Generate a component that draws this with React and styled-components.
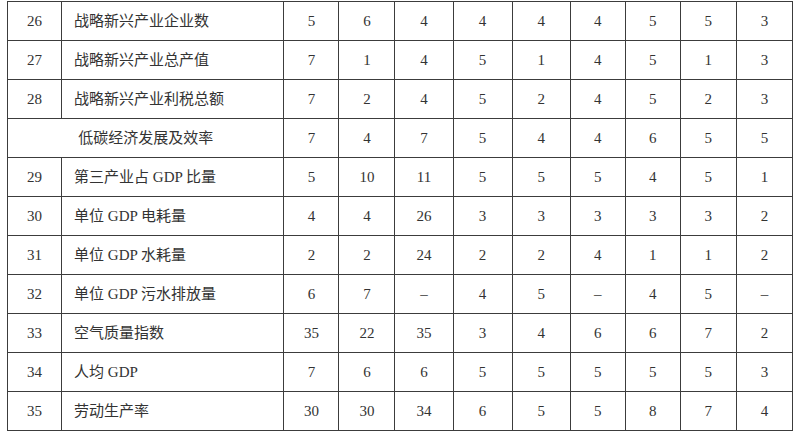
import React from 'react';
import styled, { createGlobalStyle } from 'styled-components';

const GlobalStyle = createGlobalStyle`
  html, body {
    margin: 0;
    padding: 0;
    background: #ffffff;
  }
  body {
    font-family: "Liberation Serif", "Noto Sans CJK SC", serif;
    color: #333333;
  }
`;

const Page = styled.div`
  padding: 1px 0 0 7px;
`;

const Table = styled.table`
  border-collapse: collapse;
  table-layout: fixed;
  width: 786px;
  font-size: 15px;
`;

const Row = styled.tr`
  height: 39px;
`;

const Cell = styled.td`
  border: 1px solid #3c3c3c;
  padding: 0;
  text-align: ${(p) => (p.$left ? 'left' : 'center')};
  padding-left: ${(p) => (p.$left ? '12px' : '0')};
  vertical-align: middle;
  white-space: nowrap;
  line-height: 1;
`;

const widths = [54, 222, 55, 56, 58, 59, 58, 55, 55, 56, 56];

const rows = [
  { no: '26', name: '战略新兴产业企业数', values: [5, 6, 4, 4, 4, 4, 5, 5, 3] },
  { no: '27', name: '战略新兴产业总产值', values: [7, 1, 4, 5, 1, 4, 5, 1, 3] },
  { no: '28', name: '战略新兴产业利税总额', values: [7, 2, 4, 5, 2, 4, 5, 2, 3] },
  { group: '低碳经济发展及效率', values: [7, 4, 7, 5, 4, 4, 6, 5, 5] },
  { no: '29', name: '第三产业占 GDP 比量', values: [5, 10, 11, 5, 5, 5, 4, 5, 1] },
  { no: '30', name: '单位 GDP 电耗量', values: [4, 4, 26, 3, 3, 3, 3, 3, 2] },
  { no: '31', name: '单位 GDP 水耗量', values: [2, 2, 24, 2, 2, 4, 1, 1, 2] },
  { no: '32', name: '单位 GDP 污水排放量', values: [6, 7, '–', 4, 5, '–', 4, 5, '–'] },
  { no: '33', name: '空气质量指数', values: [35, 22, 35, 3, 4, 6, 6, 7, 2] },
  { no: '34', name: '人均 GDP', values: [7, 6, 6, 5, 5, 5, 5, 5, 3] },
  { no: '35', name: '劳动生产率', values: [30, 30, 34, 6, 5, 5, 8, 7, 4] },
];

export default function App() {
  return (
    <>
      <GlobalStyle />
      <Page>
        <Table>
          <colgroup>
            {widths.map((w, i) => (
              <col key={i} style={{ width: `${w}px` }} />
            ))}
          </colgroup>
          <tbody>
            {rows.map((row, i) => (
              <Row key={i}>
                {row.group ? (
                  <Cell colSpan={2}>{row.group}</Cell>
                ) : (
                  <>
                    <Cell>{row.no}</Cell>
                    <Cell $left>{row.name}</Cell>
                  </>
                )}
                {row.values.map((v, j) => (
                  <Cell key={j}>{v}</Cell>
                ))}
              </Row>
            ))}
          </tbody>
        </Table>
      </Page>
    </>
  );
}
